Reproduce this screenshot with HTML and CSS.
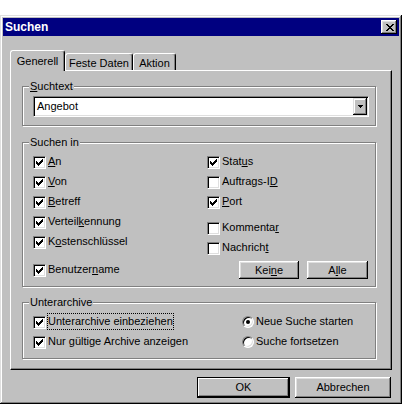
FILE: index.html
```html
<!DOCTYPE html>
<html>
  <head>
    <meta charset="utf-8">
    <title>Suchen</title>
    <link rel="stylesheet" href="styles.css">
  </head>
  <body>

    <svg width="0" height="0" class="defs">
      <symbol id="tick" viewBox="0 0 7 7">
	<path d="M0 2h1v3H0zM1 3h1v3H1zM2 4h1v3H2zM3 3h1v3H3zM4 2h1v3H4zM5 1h1v3H5zM6 0h1v3H6z"/>
      </symbol>
    </svg>

    <div class="window">
      <div class="titlebar">
	<span class="title">Suchen</span>
	<span class="close">
	  <svg width="8" height="7" viewBox="0 0 8 7"><path d="M0 0h2v1H0zM6 0h2v1H6zM1 1h2v1H1zM5 1h2v1H5zM2 2h4v1H2zM3 3h2v1H3zM2 4h4v1H2zM1 5h2v1H1zM5 5h2v1H5zM0 6h2v1H0zM6 6h2v1H6z"/></svg>
	</span>
      </div>

      <div class="tabs">
	<div class="tab active">Generell</div>
	<div class="tab tab-feste">Feste Daten</div>
	<div class="tab tab-aktion">Aktion</div>
      </div>

      <div class="page">

	<div class="group g-text">
	  <span class="legend"><u>S</u>uchtext</span>
	  <div class="combo">
	    <span class="combo-value">Angebot</span>
	    <span class="combo-btn">
	      <svg width="5" height="3" viewBox="0 0 5 3"><path d="M0 0h5v1H0zM1 1h3v1H1zM2 2h1v1H2z"/></svg>
	    </span>
	  </div>
	</div>

	<div class="group g-fields">
	  <span class="legend">Suchen in</span>
	  <div class="col col-left">
	    <div class="row"><span class="box"><svg class="tick"><use href="#tick"/></svg></span><span class="label"><u>A</u>n</span></div>
	    <div class="row"><span class="box"><svg class="tick"><use href="#tick"/></svg></span><span class="label"><u>V</u>on</span></div>
	    <div class="row"><span class="box"><svg class="tick"><use href="#tick"/></svg></span><span class="label"><u>B</u>etreff</span></div>
	    <div class="row"><span class="box"><svg class="tick"><use href="#tick"/></svg></span><span class="label">Verteil<u>k</u>ennung</span></div>
	    <div class="row"><span class="box"><svg class="tick"><use href="#tick"/></svg></span><span class="label">K<u>o</u>stenschlüssel</span></div>
	    <div class="row row-user"><span class="box"><svg class="tick"><use href="#tick"/></svg></span><span class="label">Benutzer<u>n</u>ame</span></div>
	  </div>
	  <div class="col col-right">
	    <div class="row"><span class="box"><svg class="tick"><use href="#tick"/></svg></span><span class="label">Stat<u>u</u>s</span></div>
	    <div class="row"><span class="box"></span><span class="label">Auftrags-I<u>D</u></span></div>
	    <div class="row"><span class="box"><svg class="tick"><use href="#tick"/></svg></span><span class="label"><u>P</u>ort</span></div>
	    <div class="row row-comment"><span class="box"></span><span class="label">Kommenta<u>r</u></span></div>
	    <div class="row"><span class="box"></span><span class="label">Nachrich<u>t</u></span></div>
	    <div class="small-buttons">
	      <button type="button" class="btn btn-keine">Kei<u>n</u>e</button>
	      <button type="button" class="btn btn-alle">A<u>l</u>le</button>
	    </div>
	  </div>
	</div>

	<div class="group g-archive">
	  <span class="legend">Unterarchive</span>
	  <div class="col col-archive">
	    <div class="row"><span class="box"><svg class="tick"><use href="#tick"/></svg></span><span class="label focus">Unterarchive einbeziehen</span></div>
	    <div class="row"><span class="box"><svg class="tick"><use href="#tick"/></svg></span><span class="label">Nur gültige Archive anzeigen</span></div>
	  </div>
	  <div class="col">
	    <div class="row"><span class="radio on"></span><span class="label">Neue Suche starten</span></div>
	    <div class="row"><span class="radio"></span><span class="label">Suche fortsetzen</span></div>
	  </div>
	</div>

      </div>

      <div class="actions">
	<button type="button" class="btn btn-default btn-ok">OK</button>
	<button type="button" class="btn btn-cancel">Abbrechen</button>
      </div>
    </div>

  </body>
</html>
```

FILE: styles.css
```css
      body {
	  margin: 0;
	  background: #fff;
	  color: #000;
	  font-family: "Liberation Sans", Arial, sans-serif;
	  font-size: 11px;
	  line-height: 13px;
      }

      .defs {
	  position: absolute;
      }

      u {
	  text-decoration: underline;
	  text-underline-offset: 1px;
      }

      .window {
	  width: 402px;
	  height: 389px;
	  margin-top: 15px;
	  box-sizing: border-box;
	  padding: 3px;
	  background: #c0c0c0;
	  box-shadow: inset -1px -1px #000, inset 1px 1px #dfdfdf,
		      inset -2px -2px #808080, inset 2px 2px #fff;
      }

      .titlebar {
	  height: 18px;
	  display: flex;
	  align-items: center;
	  justify-content: space-between;
	  padding: 0 2px;
	  background: #000080;
	  color: #fff;
      }

      .title {
	  font-weight: bold;
	  font-size: 12px;
      }

      .close {
	  width: 16px;
	  height: 14px;
	  box-sizing: border-box;
	  display: flex;
	  align-items: center;
	  justify-content: center;
	  padding-left: 1px;
	  background: #c0c0c0;
	  box-shadow: inset -1px -1px #000, inset 1px 1px #fff,
		      inset -2px -2px #808080, inset 2px 2px #dfdfdf;
      }

      .tabs {
	  display: flex;
	  align-items: flex-end;
	  height: 20px;
	  margin-top: 14px;
	  padding-left: 7px;
      }

      .tab {
	  box-sizing: border-box;
	  height: 17px;
	  padding-top: 3px;
	  text-align: center;
	  border-top: 1px solid #fff;
	  border-left: 1px solid #fff;
	  border-right: 1px solid #000;
	  border-radius: 3px 3px 0 0;
	  box-shadow: inset -1px 0 #808080;
      }

      .tab.active {
	  position: relative;
	  z-index: 1;
	  width: 55px;
	  height: 21px;
	  padding-top: 4px;
	  margin-bottom: -1px;
	  background: #c0c0c0;
      }

      .tab-feste {
	  width: 68px;
      }

      .tab-aktion {
	  width: 43px;
      }

      .page {
	  width: 382px;
	  height: 300px;
	  box-sizing: border-box;
	  margin-left: 7px;
	  padding: 15px 0 0 11px;
	  border-top: 1px solid #fff;
	  border-left: 1px solid #fff;
	  border-right: 1px solid #000;
	  border-bottom: 1px solid #000;
	  box-shadow: inset -1px -1px #808080;
      }

      .group {
	  position: relative;
	  box-sizing: border-box;
	  width: 354px;
	  border: 1px solid #808080;
	  box-shadow: 1px 1px 0 #fff, inset 1px 1px 0 #fff;
      }

      .legend {
	  position: absolute;
	  top: -7px;
	  left: 6px;
	  padding: 0 1px;
	  background: #c0c0c0;
      }

      .g-text {
	  height: 40px;
	  padding: 9px 0 0 10px;
      }

      .g-fields {
	  display: flex;
	  height: 145px;
	  margin-top: 16px;
	  padding: 10px 0 0 10px;
      }

      .g-archive {
	  display: flex;
	  height: 57px;
	  margin-top: 15px;
	  padding: 10px 0 0 10px;
      }

      .combo {
	  display: flex;
	  justify-content: space-between;
	  width: 336px;
	  height: 21px;
	  box-sizing: border-box;
	  padding: 1px;
	  border: 1px solid;
	  border-color: #808080 #fff #fff #808080;
	  box-shadow: inset 1px 1px #000, inset -1px -1px #dfdfdf;
	  background: #fff;
      }

      .combo-value {
	  padding-left: 2px;
	  line-height: 17px;
      }

      .combo-btn {
	  width: 14px;
	  height: 17px;
	  display: flex;
	  align-items: center;
	  justify-content: center;
	  background: #c0c0c0;
	  box-shadow: inset -1px -1px #000, inset 1px 1px #dfdfdf,
		      inset -2px -2px #808080, inset 2px 2px #fff;
      }

      .col-left {
	  width: 174px;
      }

      .col-right {
	  width: 161px;
      }

      .col-archive {
	  width: 209px;
      }

      .row {
	  display: flex;
	  align-items: flex-start;
	  height: 20px;
      }

      .row-user {
	  margin-top: 8px;
      }

      .row-comment {
	  margin-top: 6px;
      }

      .box {
	  width: 13px;
	  height: 13px;
	  box-sizing: border-box;
	  margin-top: 3px;
	  flex: none;
	  border: 1px solid;
	  border-color: #808080 #fff #fff #808080;
	  box-shadow: inset 1px 1px #000, inset -1px -1px #dfdfdf;
	  background: #fff;
      }

      .tick {
	  display: block;
	  width: 7px;
	  height: 7px;
	  margin: 2px;
      }

      .radio {
	  width: 12px;
	  height: 12px;
	  box-sizing: border-box;
	  margin-top: 3px;
	  flex: none;
	  display: flex;
	  align-items: center;
	  justify-content: center;
	  border-radius: 50%;
	  border: 1px solid;
	  border-color: #808080 #fff #fff #808080;
	  box-shadow: inset 1px 1px #000, inset -1px -1px #dfdfdf;
	  background: #fff;
      }

      .radio.on::after {
	  content: "";
	  width: 4px;
	  height: 4px;
	  border-radius: 50%;
	  background: #000;
      }

      .label {
	  margin-left: 1px;
	  padding: 1px 0;
	  border: 1px solid transparent;
	  white-space: nowrap;
      }

      .label.focus {
	  border: 1px dotted #000;
      }

      .small-buttons {
	  display: flex;
	  justify-content: flex-end;
	  gap: 8px;
	  margin-top: 2px;
      }

      .btn {
	  box-sizing: border-box;
	  height: 18px;
	  padding: 0;
	  border: none;
	  font: inherit;
	  color: #000;
	  background: #c0c0c0;
	  box-shadow: inset -1px -1px #000, inset 1px 1px #fff,
		      inset -2px -2px #808080, inset 2px 2px #dfdfdf;
      }

      .btn-keine {
	  width: 60px;
      }

      .btn-alle {
	  width: 61px;
      }

      .actions {
	  display: flex;
	  justify-content: flex-end;
	  gap: 5px;
	  margin-top: 7px;
	  padding-right: 8px;
      }

      .actions .btn {
	  height: 21px;
      }

      .btn-default {
	  border: 1px solid #000;
	  box-shadow: inset -1px -1px #000, inset 1px 1px #fff,
		      inset -2px -2px #808080;
      }

      .btn-ok {
	  width: 93px;
      }

      .btn-cancel {
	  width: 96px;
      }
```
